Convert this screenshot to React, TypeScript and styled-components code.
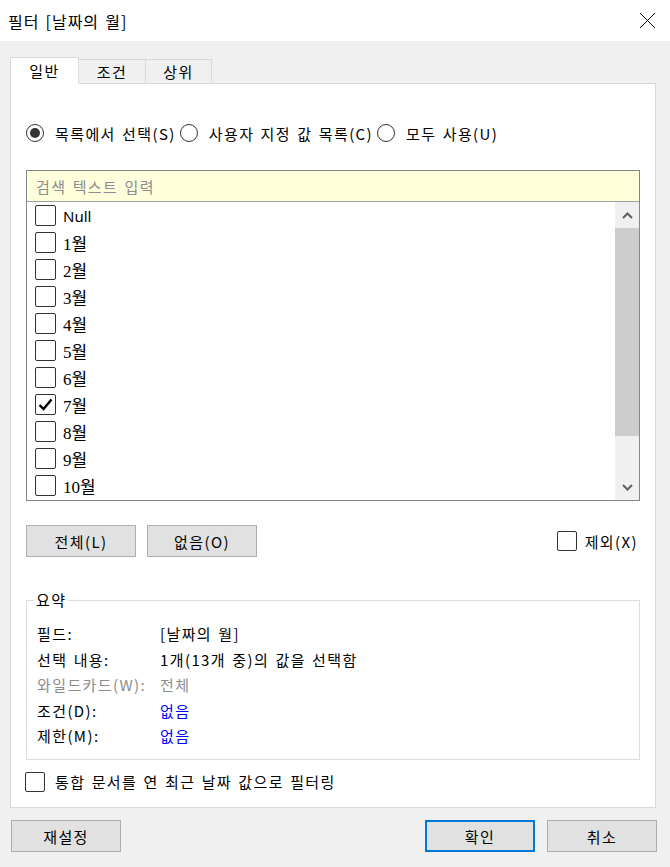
import React from "react";
import styled, { createGlobalStyle } from "styled-components";

const GlobalStyle = createGlobalStyle`
  html, body {
    margin: 0;
    padding: 0;
    background: #f0f0f0;
  }
  body {
    font-family: "Noto Sans CJK KR", "Noto Sans", sans-serif;
    font-size: 15px;
    letter-spacing: 1.4px;
    word-spacing: 1.5px;
    color: #000;
  }
`;

const Window = styled.div`
  width: 670px;
  height: 867px;
  display: flex;
  flex-direction: column;
  background: #f0f0f0;
  overflow: hidden;
`;

const TitleBar = styled.div`
  height: 41px;
  flex: none;
  box-sizing: border-box;
  background: #fff;
  display: flex;
  align-items: center;
  justify-content: space-between;
  padding: 0 14px 0 8px;
`;

const Title = styled.div`
  font-size: 16px;
  letter-spacing: 1px;
`;

const CloseButton = styled.button`
  border: 0;
  background: none;
  padding: 0;
  width: 17px;
  height: 17px;
  display: flex;
`;

const Body = styled.div`
  display: flex;
  flex-direction: column;
  padding: 16px 14px 0 10px;
`;

const TabStrip = styled.div`
  display: flex;
  align-items: flex-end;
  height: 26px;
  position: relative;
  z-index: 1;
`;

const Tab = styled.div<{ $active?: boolean; $w: number }>`
  box-sizing: border-box;
  width: ${(p) => p.$w}px;
  height: ${(p) => (p.$active ? 27 : 24)}px;
  margin-bottom: ${(p) => (p.$active ? -1 : 0)}px;
  margin-left: ${(p) => (p.$active ? 0 : -1)}px;
  border: 1px solid #d9d9d9;
  border-bottom: none;
  background: ${(p) => (p.$active ? "#fff" : "#f0f0f0")};
  display: flex;
  align-items: center;
  justify-content: center;
  padding-bottom: ${(p) => (p.$active ? 2 : 0)}px;
`;

const Panel = styled.div`
  box-sizing: border-box;
  height: 725px;
  background: #fff;
  border: 1px solid #d9d9d9;
  padding: 0 15px;
  display: flex;
  flex-direction: column;
`;

const RadioRow = styled.div`
  margin-top: 39px;
  height: 20px;
  display: flex;
  align-items: center;
  gap: 4px;
`;

const RadioOption = styled.label`
  display: flex;
  align-items: center;
  gap: 11px;
`;

const Radio = styled.span<{ $checked?: boolean }>`
  box-sizing: border-box;
  width: 18px;
  height: 18px;
  border: 1px solid #333;
  border-radius: 50%;
  display: flex;
  align-items: center;
  justify-content: center;
  &::after {
    content: "";
    width: 10px;
    height: 10px;
    border-radius: 50%;
    background: ${(p) => (p.$checked ? "#333" : "transparent")};
  }
`;

const ListFrame = styled.div`
  margin-top: 27px;
  border: 1px solid #828790;
  display: flex;
  flex-direction: column;
`;

const SearchInput = styled.input`
  box-sizing: border-box;
  height: 31px;
  margin: 0;
  border: none;
  border-bottom: 1px solid #a0a0a0;
  background: #ffffdc;
  padding: 0 0 0 9px;
  font: inherit;
  letter-spacing: inherit;
  word-spacing: inherit;
  outline: none;
  &::placeholder {
    color: #8c8c8c;
  }
`;

const ListBody = styled.div`
  height: 298px;
  display: flex;
`;

const Items = styled.div`
  flex: 1;
  overflow: hidden;
`;

const Item = styled.div`
  height: 27px;
  display: flex;
  align-items: center;
  gap: 7px;
  padding-left: 8px;
`;

const ItemText = styled.span<{ $serif?: boolean }>`
  font-family: ${(p) =>
    p.$serif
      ? `"Liberation Serif", "Noto Sans CJK KR", serif`
      : `"Noto Sans", "Noto Sans CJK KR", sans-serif`};
  font-size: ${(p) => (p.$serif ? 17 : 15)}px;
  letter-spacing: 0;
`;

const Box = styled.span<{ $size?: number }>`
  box-sizing: border-box;
  flex: none;
  width: ${(p) => p.$size ?? 21}px;
  height: ${(p) => p.$size ?? 21}px;
  border: 1px solid #333;
  border-radius: 2px;
  background: #fff;
  display: flex;
  align-items: center;
  justify-content: center;
`;

const ScrollBar = styled.div`
  width: 24px;
  flex: none;
  background: #f0f0f0;
  display: flex;
  flex-direction: column;
`;

const ScrollArrow = styled.div`
  height: 26px;
  flex: none;
  display: flex;
  align-items: center;
  justify-content: center;
`;

const ScrollTrack = styled.div`
  flex: 1;
`;

const Thumb = styled.div`
  height: 208px;
  background: #cdcdcd;
`;

const ButtonRow = styled.div`
  margin-top: 24px;
  height: 32px;
  display: flex;
  align-items: center;
  gap: 11px;
`;

const Button = styled.button<{ $default?: boolean }>`
  box-sizing: border-box;
  width: 110px;
  height: 32px;
  margin: 0;
  padding: 0;
  background: #e1e1e1;
  border: ${(p) => (p.$default ? "2px solid #0078d7" : "1px solid #adadad")};
  font: inherit;
  letter-spacing: inherit;
  color: #000;
`;

const Spacer = styled.div`
  flex: 1;
`;

const CheckOption = styled.label`
  display: flex;
  align-items: center;
  gap: 8px;
  margin-right: 2px;
`;

const Group = styled.fieldset`
  margin: 33px 0 0;
  border: 1px solid #dcdcdc;
  padding: 11px 0 10px 10px;
  min-width: 0;
`;

const Legend = styled.legend`
  padding: 0 2px;
  margin-left: -3px;
  line-height: 20px;
`;

const SummaryGrid = styled.div`
  display: grid;
  grid-template-columns: 123px 1fr;
  line-height: 25.5px;
`;

const SummaryCell = styled.div<{ $tone?: "dim" | "link" }>`
  white-space: nowrap;
  color: ${(p) =>
    p.$tone === "dim" ? "#8c8c8c" : p.$tone === "link" ? "#0000ff" : "#000"};
`;

const BottomCheck = styled.label`
  margin-top: 12px;
  height: 20px;
  display: flex;
  align-items: center;
  gap: 10px;
  margin-left: -1px;
`;

const Footer = styled.div`
  display: flex;
  justify-content: space-between;
  padding: 12px 13px 0 11px;
`;

const FooterGroup = styled.div`
  display: flex;
  gap: 12px;
`;

// only the rows that fit in the list are shown; the rest sit below the scroll
const months = [
  { label: "Null", serif: false, checked: false },
  ...Array.from({ length: 10 }, (_, i) => ({
    label: `${i + 1}월`,
    serif: true,
    checked: i === 6,
  })),
];

const summary: [string, string, "dim" | "link" | undefined][] = [
  ["필드:", "[날짜의 월]", undefined],
  ["선택 내용:", "1개(13개 중)의 값을 선택함", undefined],
  ["와일드카드(W):", "전체", "dim"],
  ["조건(D):", "없음", "link"],
  ["제한(M):", "없음", "link"],
];

const Check = () => (
  <svg width="15" height="13" viewBox="0 0 15 13">
    <path d="M1.5 7 L5.5 11 L13.5 1.5" fill="none" stroke="#000" strokeWidth="2.4" />
  </svg>
);

const Chevron = ({ up }: { up?: boolean }) => (
  <svg width="11" height="7" viewBox="0 0 11 7">
    <path
      d={up ? "M1 6 L5.5 1.5 L10 6" : "M1 1 L5.5 5.5 L10 1"}
      fill="none"
      stroke="#606060"
      strokeWidth="2"
    />
  </svg>
);

export default function App() {
  return (
    <>
      <GlobalStyle />
      <Window>
        <TitleBar>
          <Title>필터 [날짜의 월]</Title>
          <CloseButton>
            <svg width="17" height="17" viewBox="0 0 17 17">
              <path d="M1 1 L16 16 M16 1 L1 16" stroke="#000" strokeWidth="1" />
            </svg>
          </CloseButton>
        </TitleBar>
        <Body>
          <TabStrip>
            <Tab $active $w={69}>일반</Tab>
            <Tab $w={68}>조건</Tab>
            <Tab $w={67}>상위</Tab>
          </TabStrip>
          <Panel>
            <RadioRow>
              <RadioOption>
                <Radio $checked />
                목록에서 선택(S)
              </RadioOption>
              <RadioOption>
                <Radio />
                사용자 지정 값 목록(C)
              </RadioOption>
              <RadioOption>
                <Radio />
                모두 사용(U)
              </RadioOption>
            </RadioRow>

            <ListFrame>
              <SearchInput placeholder="검색 텍스트 입력" />
              <ListBody>
                <Items>
                  {months.map((m) => (
                    <Item key={m.label}>
                      <Box>{m.checked && <Check />}</Box>
                      <ItemText $serif={m.serif}>{m.label}</ItemText>
                    </Item>
                  ))}
                </Items>
                <ScrollBar>
                  <ScrollArrow>
                    <Chevron up />
                  </ScrollArrow>
                  <ScrollTrack>
                    <Thumb />
                  </ScrollTrack>
                  <ScrollArrow>
                    <Chevron />
                  </ScrollArrow>
                </ScrollBar>
              </ListBody>
            </ListFrame>

            <ButtonRow>
              <Button>전체(L)</Button>
              <Button>없음(O)</Button>
              <Spacer />
              <CheckOption>
                <Box $size={20} />
                제외(X)
              </CheckOption>
            </ButtonRow>

            <Group>
              <Legend>요약</Legend>
              <SummaryGrid>
                {summary.map(([k, v, tone]) => (
                  <React.Fragment key={k}>
                    <SummaryCell $tone={tone === "dim" ? "dim" : undefined}>{k}</SummaryCell>
                    <SummaryCell $tone={tone}>{v}</SummaryCell>
                  </React.Fragment>
                ))}
              </SummaryGrid>
            </Group>

            <BottomCheck>
              <Box $size={20} />
              통합 문서를 연 최근 날짜 값으로 필터링
            </BottomCheck>
          </Panel>
        </Body>
        <Footer>
          <Button>재설정</Button>
          <FooterGroup>
            <Button $default>확인</Button>
            <Button>취소</Button>
          </FooterGroup>
        </Footer>
      </Window>
    </>
  );
}
